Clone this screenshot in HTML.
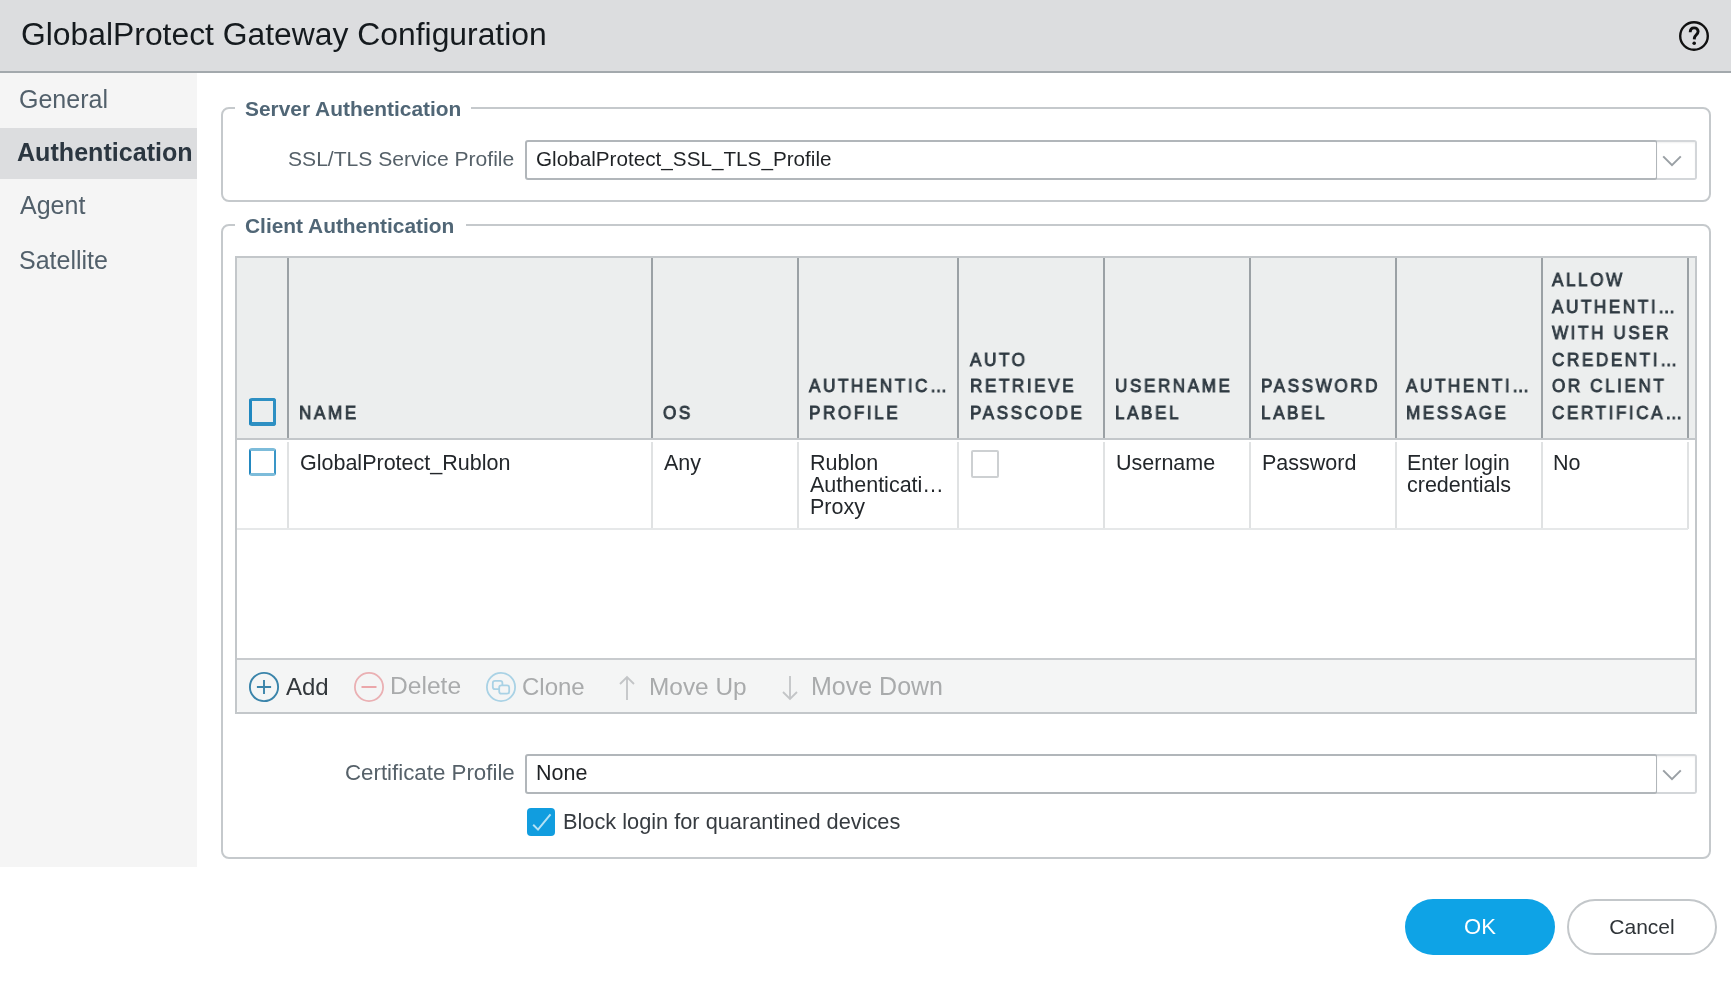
<!DOCTYPE html>
<html><head><meta charset="utf-8"><title>GlobalProtect Gateway Configuration</title>
<style>
html,body{margin:0;padding:0;background:#fff;width:1731px;height:981px;overflow:hidden;}
body{position:relative;font-family:"Liberation Sans", sans-serif;}
.t{position:absolute;white-space:nowrap;will-change:transform;}
.b{position:absolute;box-sizing:border-box;}
svg{position:absolute;overflow:visible;}
</style></head><body>
<div class="b" style="left:0px;top:0px;width:1731px;height:71px;background:#dcdddf;"></div>
<div class="b" style="left:0px;top:71px;width:1731px;height:2px;background:#a3a9ad;"></div>
<div class="t" style="left:21.00px;top:14.96px;font-size:31.85px;line-height:38px;color:#151a1e;">GlobalProtect Gateway Configuration</div>
<svg style="left:1679px;top:21px" width="30" height="30" viewBox="0 0 30 30"><circle cx="15" cy="15" r="13.8" fill="none" stroke="#111" stroke-width="2.4"/><path d="M11.2 11.3 C11.2 8.3 13 6.9 15.1 6.9 C17.4 6.9 19.1 8.4 19.1 10.6 C19.1 13.3 15.9 14.1 15.4 17 L15.3 18.4" fill="none" stroke="#111" stroke-width="2.9"/><circle cx="15.2" cy="22.3" r="1.8" fill="#111"/></svg>
<div class="b" style="left:0px;top:73px;width:197px;height:794px;background:#f5f5f5;"></div>
<div class="b" style="left:0px;top:128px;width:197px;height:51px;background:#dcdddf;"></div>
<div class="t" style="left:19.00px;top:84.33px;font-size:25px;line-height:30px;color:#52606b;">General</div>
<div class="t" style="left:16.80px;top:137.00px;font-size:25.1px;line-height:30px;color:#2b3640;font-weight:700;">Authentication</div>
<div class="t" style="left:19.50px;top:190.33px;font-size:25px;line-height:30px;color:#52606b;">Agent</div>
<div class="t" style="left:19.20px;top:244.93px;font-size:25px;line-height:30px;color:#52606b;">Satellite</div>
<div class="b" style="left:221px;top:107px;width:1490px;height:95px;border:2px solid #c5c9cc;border-radius:8px;"></div>
<div class="b" style="left:235px;top:105px;width:236px;height:6px;background:#fff;"></div>
<div class="t" style="left:245.00px;top:96.45px;font-size:20.9px;line-height:25px;color:#506676;font-weight:700;">Server Authentication</div>
<div class="b" style="left:221px;top:224px;width:1490px;height:635px;border:2px solid #c5c9cc;border-radius:8px;"></div>
<div class="b" style="left:235px;top:222px;width:231px;height:6px;background:#fff;"></div>
<div class="t" style="left:245.00px;top:213.45px;font-size:20.9px;line-height:25px;color:#506676;font-weight:700;">Client Authentication</div>
<div class="t" style="right:1216.50px;top:146.18px;font-size:21.1px;line-height:25px;color:#566169;">SSL/TLS Service Profile</div>
<div class="b" style="left:525px;top:140px;width:1133px;height:40px;border:2px solid #b1b6ba;border-radius:3px;background:#fff;"></div>
<div class="b" style="left:1657px;top:140px;width:40px;height:40px;border:2px solid #d3d6d9;border-left:none;border-radius:0 3px 3px 0;background:#fff;box-shadow:inset 0 1px 2px rgba(0,0,0,0.06);"></div>
<div class="t" style="left:535.50px;top:146.32px;font-size:20.7px;line-height:25px;color:#1f2225;">GlobalProtect_SSL_TLS_Profile</div>
<svg style="left:1662px;top:155px" width="20" height="12" viewBox="0 0 20 12"><path d="M1.2 1.4 L10 10.2 L18.8 1.4" fill="none" stroke="#9aa0a5" stroke-width="2"/></svg>
<div class="b" style="left:235px;top:256px;width:1462px;height:458px;border:2px solid #c3c7ca;background:#fff;"></div>
<div class="b" style="left:237px;top:258px;width:1458px;height:180px;background:#eceeee;"></div>
<div class="b" style="left:237px;top:438px;width:1458px;height:2px;background:#c3c7ca;"></div>
<div class="b" style="left:287px;top:258px;width:2px;height:180px;background:#9ba1a5;"></div>
<div class="b" style="left:287px;top:442px;width:2px;height:87px;background:#e0e2e3;"></div>
<div class="b" style="left:651px;top:258px;width:2px;height:180px;background:#9ba1a5;"></div>
<div class="b" style="left:651px;top:442px;width:2px;height:87px;background:#e0e2e3;"></div>
<div class="b" style="left:797px;top:258px;width:2px;height:180px;background:#9ba1a5;"></div>
<div class="b" style="left:797px;top:442px;width:2px;height:87px;background:#e0e2e3;"></div>
<div class="b" style="left:957px;top:258px;width:2px;height:180px;background:#9ba1a5;"></div>
<div class="b" style="left:957px;top:442px;width:2px;height:87px;background:#e0e2e3;"></div>
<div class="b" style="left:1103px;top:258px;width:2px;height:180px;background:#9ba1a5;"></div>
<div class="b" style="left:1103px;top:442px;width:2px;height:87px;background:#e0e2e3;"></div>
<div class="b" style="left:1249px;top:258px;width:2px;height:180px;background:#9ba1a5;"></div>
<div class="b" style="left:1249px;top:442px;width:2px;height:87px;background:#e0e2e3;"></div>
<div class="b" style="left:1395px;top:258px;width:2px;height:180px;background:#9ba1a5;"></div>
<div class="b" style="left:1395px;top:442px;width:2px;height:87px;background:#e0e2e3;"></div>
<div class="b" style="left:1541px;top:258px;width:2px;height:180px;background:#9ba1a5;"></div>
<div class="b" style="left:1541px;top:442px;width:2px;height:87px;background:#e0e2e3;"></div>
<div class="b" style="left:1687px;top:258px;width:2px;height:180px;background:#9ba1a5;"></div>
<div class="b" style="left:1687px;top:442px;width:2px;height:87px;background:#e0e2e3;"></div>
<div class="b" style="left:237px;top:528px;width:1451px;height:2px;background:#e6e8e9;"></div>
<div class="b" style="left:237px;top:658px;width:1458px;height:2px;background:#c8cbce;"></div>
<div class="b" style="left:237px;top:660px;width:1458px;height:52px;background:#f4f5f5;border-radius:0 0 3px 3px;"></div>
<div class="b" style="left:249px;top:398px;width:27px;height:28px;border:3px solid #2e90c3;border-bottom-width:4px;border-left-color:#2088c0;border-radius:3px;"></div>
<div class="b" style="left:249px;top:448px;width:27px;height:28px;border:3px solid #7dbcda;border-left:2.5px solid #2388c0;border-right:2.5px solid #3a96c7;border-radius:3px;background:#fff;"></div>
<div class="b" style="left:971px;top:450px;width:28px;height:28px;border:2px solid #cdd0d2;border-radius:2px;background:#fff;"></div>
<div class="t" style="left:299.00px;top:402.05px;font-size:18.6px;line-height:22px;color:#2f3a42;letter-spacing:2.8px;-webkit-text-stroke:0.9px #2f3a42;transform:scaleX(0.92);transform-origin:0 0;">NAME</div>
<div class="t" style="left:662.60px;top:402.05px;font-size:18.6px;line-height:22px;color:#2f3a42;letter-spacing:2.8px;-webkit-text-stroke:0.9px #2f3a42;transform:scaleX(0.92);transform-origin:0 0;">OS</div>
<div class="t" style="left:809.00px;top:375.45px;font-size:18.6px;line-height:22px;color:#2f3a42;letter-spacing:2.8px;-webkit-text-stroke:0.9px #2f3a42;transform:scaleX(0.92);transform-origin:0 0;">AUTHENTIC…</div>
<div class="t" style="left:809.00px;top:402.05px;font-size:18.6px;line-height:22px;color:#2f3a42;letter-spacing:2.8px;-webkit-text-stroke:0.9px #2f3a42;transform:scaleX(0.92);transform-origin:0 0;">PROFILE</div>
<div class="t" style="left:970.00px;top:348.85px;font-size:18.6px;line-height:22px;color:#2f3a42;letter-spacing:2.8px;-webkit-text-stroke:0.9px #2f3a42;transform:scaleX(0.92);transform-origin:0 0;">AUTO</div>
<div class="t" style="left:970.00px;top:375.45px;font-size:18.6px;line-height:22px;color:#2f3a42;letter-spacing:2.8px;-webkit-text-stroke:0.9px #2f3a42;transform:scaleX(0.92);transform-origin:0 0;">RETRIEVE</div>
<div class="t" style="left:970.00px;top:402.05px;font-size:18.6px;line-height:22px;color:#2f3a42;letter-spacing:2.8px;-webkit-text-stroke:0.9px #2f3a42;transform:scaleX(0.92);transform-origin:0 0;">PASSCODE</div>
<div class="t" style="left:1115.00px;top:375.45px;font-size:18.6px;line-height:22px;color:#2f3a42;letter-spacing:2.8px;-webkit-text-stroke:0.9px #2f3a42;transform:scaleX(0.92);transform-origin:0 0;">USERNAME</div>
<div class="t" style="left:1115.00px;top:402.05px;font-size:18.6px;line-height:22px;color:#2f3a42;letter-spacing:2.8px;-webkit-text-stroke:0.9px #2f3a42;transform:scaleX(0.92);transform-origin:0 0;">LABEL</div>
<div class="t" style="left:1261.00px;top:375.45px;font-size:18.6px;line-height:22px;color:#2f3a42;letter-spacing:2.8px;-webkit-text-stroke:0.9px #2f3a42;transform:scaleX(0.92);transform-origin:0 0;">PASSWORD</div>
<div class="t" style="left:1261.00px;top:402.05px;font-size:18.6px;line-height:22px;color:#2f3a42;letter-spacing:2.8px;-webkit-text-stroke:0.9px #2f3a42;transform:scaleX(0.92);transform-origin:0 0;">LABEL</div>
<div class="t" style="left:1406.00px;top:375.45px;font-size:18.6px;line-height:22px;color:#2f3a42;letter-spacing:2.8px;-webkit-text-stroke:0.9px #2f3a42;transform:scaleX(0.92);transform-origin:0 0;">AUTHENTI…</div>
<div class="t" style="left:1406.00px;top:402.05px;font-size:18.6px;line-height:22px;color:#2f3a42;letter-spacing:2.8px;-webkit-text-stroke:0.9px #2f3a42;transform:scaleX(0.92);transform-origin:0 0;">MESSAGE</div>
<div class="t" style="left:1552.00px;top:269.05px;font-size:18.6px;line-height:22px;color:#2f3a42;letter-spacing:2.8px;-webkit-text-stroke:0.9px #2f3a42;transform:scaleX(0.92);transform-origin:0 0;">ALLOW</div>
<div class="t" style="left:1552.00px;top:295.65px;font-size:18.6px;line-height:22px;color:#2f3a42;letter-spacing:2.8px;-webkit-text-stroke:0.9px #2f3a42;transform:scaleX(0.92);transform-origin:0 0;">AUTHENTI…</div>
<div class="t" style="left:1552.00px;top:322.25px;font-size:18.6px;line-height:22px;color:#2f3a42;letter-spacing:2.8px;-webkit-text-stroke:0.9px #2f3a42;transform:scaleX(0.92);transform-origin:0 0;">WITH USER</div>
<div class="t" style="left:1552.00px;top:348.85px;font-size:18.6px;line-height:22px;color:#2f3a42;letter-spacing:2.8px;-webkit-text-stroke:0.9px #2f3a42;transform:scaleX(0.92);transform-origin:0 0;">CREDENTI…</div>
<div class="t" style="left:1552.00px;top:375.45px;font-size:18.6px;line-height:22px;color:#2f3a42;letter-spacing:2.8px;-webkit-text-stroke:0.9px #2f3a42;transform:scaleX(0.92);transform-origin:0 0;">OR CLIENT</div>
<div class="t" style="left:1552.00px;top:402.05px;font-size:18.6px;line-height:22px;color:#2f3a42;letter-spacing:2.8px;-webkit-text-stroke:0.9px #2f3a42;transform:scaleX(0.92);transform-origin:0 0;">CERTIFICA…</div>
<div class="t" style="left:300.00px;top:449.85px;font-size:21.5px;line-height:26px;color:#23272b;">GlobalProtect_Rublon</div>
<div class="t" style="left:663.60px;top:449.85px;font-size:21.5px;line-height:26px;color:#23272b;">Any</div>
<div class="t" style="left:810.00px;top:449.85px;font-size:21.5px;line-height:26px;color:#23272b;">Rublon</div>
<div class="t" style="left:810.00px;top:471.85px;font-size:21.5px;line-height:26px;color:#23272b;">Authenticati…</div>
<div class="t" style="left:810.00px;top:493.85px;font-size:21.5px;line-height:26px;color:#23272b;">Proxy</div>
<div class="t" style="left:1116.00px;top:449.85px;font-size:21.5px;line-height:26px;color:#23272b;">Username</div>
<div class="t" style="left:1262.00px;top:449.85px;font-size:21.5px;line-height:26px;color:#23272b;">Password</div>
<div class="t" style="left:1407.00px;top:449.85px;font-size:21.5px;line-height:26px;color:#23272b;">Enter login</div>
<div class="t" style="left:1407.00px;top:471.85px;font-size:21.5px;line-height:26px;color:#23272b;">credentials</div>
<div class="t" style="left:1553.00px;top:449.85px;font-size:21.5px;line-height:26px;color:#23272b;">No</div>
<svg style="left:248px;top:671px" width="32" height="32" viewBox="0 0 32 32"><circle cx="16" cy="16" r="14.1" fill="none" stroke="#3a84aa" stroke-width="1.9"/><path d="M16 8.9 V23.1 M8.9 16 H23.1" stroke="#3a84aa" stroke-width="1.9"/></svg>
<div class="t" style="left:285.50px;top:672.18px;font-size:24px;line-height:29px;color:#33383c;">Add</div>
<svg style="left:353px;top:671px" width="32" height="32" viewBox="0 0 32 32"><circle cx="16" cy="16" r="14.1" fill="none" stroke="#eab0b3" stroke-width="1.8"/><path d="M8.5 16 H23.5" stroke="#eba7aa" stroke-width="2"/></svg>
<div class="t" style="left:389.50px;top:671.47px;font-size:24.6px;line-height:30px;color:#a9abac;">Delete</div>
<svg style="left:485px;top:671px" width="32" height="32" viewBox="0 0 32 32"><circle cx="16" cy="16" r="14.1" fill="none" stroke="#a9d2e5" stroke-width="1.8"/><rect x="7.8" y="9.8" width="9.6" height="8.4" rx="2.2" fill="none" stroke="#a9d2e5" stroke-width="1.8"/><rect x="14.2" y="14.4" width="10" height="8.2" rx="2.2" fill="#f4f5f5" stroke="#a9d2e5" stroke-width="1.8"/></svg>
<div class="t" style="left:522.00px;top:672.18px;font-size:24px;line-height:29px;color:#a9abac;">Clone</div>
<svg style="left:618px;top:675px" width="18" height="26" viewBox="0 0 18 26"><path d="M9 25 V2 M2 9 L9 2 L16 9" fill="none" stroke="#c3c5c7" stroke-width="1.8"/></svg>
<div class="t" style="left:649.00px;top:672.04px;font-size:24.4px;line-height:29px;color:#a9abac;">Move Up</div>
<svg style="left:781px;top:675px" width="18" height="26" viewBox="0 0 18 26"><path d="M9 1 V24 M2 17 L9 24 L16 17" fill="none" stroke="#c3c5c7" stroke-width="1.8"/></svg>
<div class="t" style="left:811.00px;top:671.33px;font-size:25px;line-height:30px;color:#a9abac;">Move Down</div>
<div class="t" style="right:1216.50px;top:759.37px;font-size:22.3px;line-height:27px;color:#566169;">Certificate Profile</div>
<div class="b" style="left:525px;top:754px;width:1133px;height:40px;border:2px solid #b1b6ba;border-radius:3px;background:#fff;"></div>
<div class="b" style="left:1657px;top:754px;width:40px;height:40px;border:2px solid #d3d6d9;border-left:none;border-radius:0 3px 3px 0;background:#fff;box-shadow:inset 0 1px 2px rgba(0,0,0,0.06);"></div>
<div class="t" style="left:535.50px;top:760.15px;font-size:21.5px;line-height:26px;color:#1f2225;">None</div>
<svg style="left:1662px;top:769px" width="20" height="12" viewBox="0 0 20 12"><path d="M1.2 1.4 L10 10.2 L18.8 1.4" fill="none" stroke="#9aa0a5" stroke-width="2"/></svg>
<div class="b" style="left:527px;top:808px;width:28px;height:28px;background:#119ddf;border-radius:4px;"></div>
<svg style="left:527px;top:808px" width="28" height="28" viewBox="0 0 28 28"><path d="M6.2 16.8 L11 21.6 L23.5 6.3" fill="none" stroke="#b5e2f5" stroke-width="2"/></svg>
<div class="t" style="left:563.20px;top:808.66px;font-size:21.75px;line-height:26px;color:#363b40;">Block login for quarantined devices</div>
<div class="b" style="left:1405px;top:899px;width:150px;height:56px;background:#0ea3e6;border-radius:28px;"></div>
<div class="t" style="left:1405px;top:899px;width:150px;height:56px;line-height:56px;text-align:center;font-size:22px;color:#fff;">OK</div>
<div class="b" style="left:1567px;top:899px;width:150px;height:56px;border:2px solid #c3c7ca;border-radius:28px;background:#fff;"></div>
<div class="t" style="left:1567px;top:899px;width:150px;height:56px;line-height:56px;text-align:center;font-size:21px;color:#2f3438;">Cancel</div>
</body></html>
